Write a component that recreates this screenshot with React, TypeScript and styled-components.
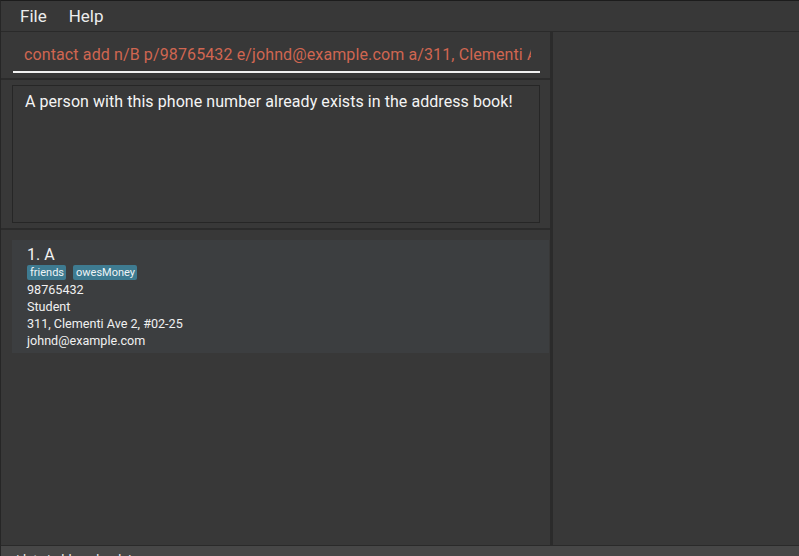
import React from "react";
import styled, { createGlobalStyle } from "styled-components";

const Global = createGlobalStyle`
  html, body { margin: 0; padding: 0; background: #383838; }
  body { font-family: Roboto, "Liberation Sans", sans-serif; overflow: hidden; }
`;

const Window = styled.div`
  width: 799px;
  height: 556px;
  display: flex;
  flex-direction: column;
  background: #383838;
  border-top: 1px solid #1c1c1c;
  border-left: 1px solid #262626;
  box-sizing: border-box;
  overflow: hidden;
`;

const MenuBar = styled.div`
  height: 30px;
  display: flex;
  align-items: center;
  gap: 22px;
  padding-left: 19px;
  border-bottom: 1px solid #2a2a2a;
  flex-shrink: 0;
`;

const MenuItem = styled.span`
  font-size: 17px;
  color: #ececec;
`;

const Main = styled.div`
  flex: 1;
  display: flex;
  min-height: 0;
`;

const LeftPane = styled.div`
  width: 549px;
  display: flex;
  flex-direction: column;
`;

const Splitter = styled.div`
  width: 3px;
  background: #2b2b2b;
`;

const RightPane = styled.div`
  flex: 1;
`;

const CommandPane = styled.div`
  height: 46px;
  padding: 0 10px 0 12px;
  box-sizing: border-box;
  display: flex;
  align-items: flex-start;
`;

const CommandField = styled.div`
  width: 527px;
  margin-top: 11px;
  height: 30px;
  border-bottom: 2px solid #f2f2f2;
  padding: 0 9px 0 11px;
  box-sizing: border-box;
`;

const CommandText = styled.div`
  overflow: hidden;
  white-space: nowrap;
  font-size: 16px;
  letter-spacing: 0.12px;
  line-height: 24px;
  color: #d06651;
`;

const HDivider = styled.div`
  height: 2px;
  background: #2b2b2b;
`;

const ResultPane = styled.div`
  height: 148px;
  padding: 5px 0 0 11px;
  box-sizing: border-box;
`;

const ResultBox = styled.div`
  width: 528px;
  height: 138px;
  border: 1px solid #262626;
  box-sizing: border-box;
  padding: 5px 12px;
  font-size: 16px;
  letter-spacing: 0.06px;
  line-height: 22px;
  color: #f4f4f4;
`;

const ListPane = styled.div`
  flex: 1;
  padding: 10px 0 0 11px;
`;

const Card = styled.div`
  width: 537px;
  height: 113px;
  background: #3c3e40;
  box-sizing: border-box;
  padding: 5px 15px;
  display: flex;
  flex-direction: column;
`;

const Name = styled.div`
  font-size: 16px;
  line-height: 20px;
  color: #f2f2f2;
`;

const Tags = styled.div`
  display: flex;
  gap: 7px;
  margin: 0 0 1px;
`;

const Tag = styled.span`
  background: #3e7b91;
  color: #eef4f6;
  font-size: 11px;
  line-height: 15px;
  padding: 0 2px 0 3px;
  border-radius: 2px;
`;

const Field = styled.div`
  font-size: 12.6px;
  line-height: 17px;
  color: #f0f0f0;
`;

const StatusBar = styled.div`
  height: 10px;
  flex-shrink: 0;
  background: #474747;
  border-top: 1px solid #2a2a2a;
  padding-left: 9px;
  font-size: 13px;
  line-height: 28px;
  color: #ededed;
  overflow: hidden;
`;

export default function App() {
  return (
    <>
      <Global />
      <Window>
        <MenuBar>
          <MenuItem>File</MenuItem>
          <MenuItem>Help</MenuItem>
        </MenuBar>
        <Main>
          <LeftPane>
            <CommandPane>
              <CommandField>
                <CommandText>
                  contact add n/B p/98765432 e/johnd@example.com a/311, Clementi Ave 2, #02-25
                </CommandText>
              </CommandField>
            </CommandPane>
            <HDivider />
            <ResultPane>
              <ResultBox>
                A person with this phone number already exists in the address book!
              </ResultBox>
            </ResultPane>
            <HDivider />
            <ListPane>
              <Card>
                <Name>1. A</Name>
                <Tags>
                  <Tag>friends</Tag>
                  <Tag>owesMoney</Tag>
                </Tags>
                <Field>98765432</Field>
                <Field>Student</Field>
                <Field>311, Clementi Ave 2, #02-25</Field>
                <Field>johnd@example.com</Field>
              </Card>
            </ListPane>
          </LeftPane>
          <Splitter />
          <RightPane />
        </Main>
        <StatusBar>./data/addressbook.json</StatusBar>
      </Window>
    </>
  );
}
